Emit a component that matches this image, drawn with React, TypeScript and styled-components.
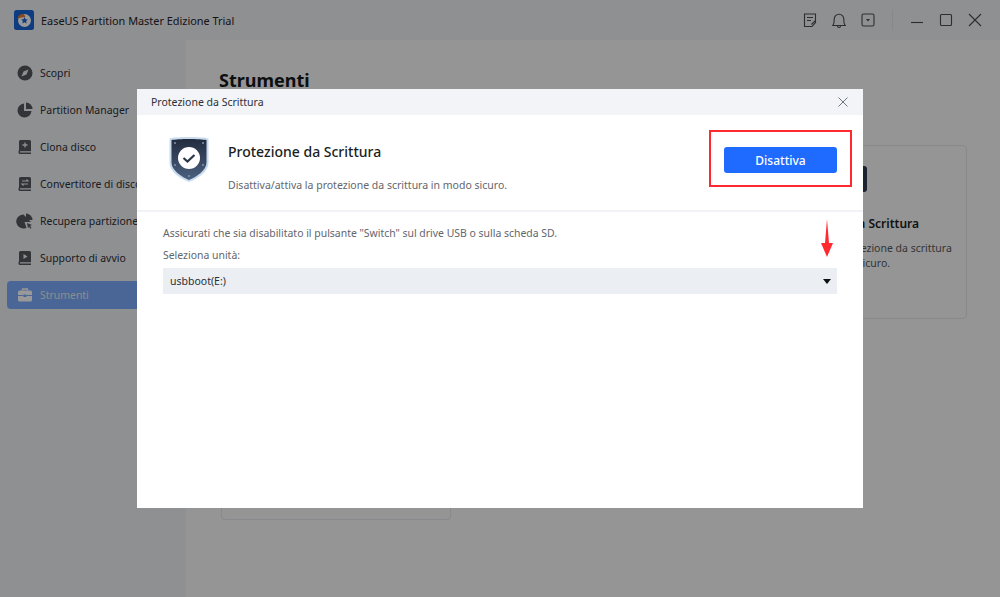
import React from "react";
import styled, { createGlobalStyle } from "styled-components";

const Global = createGlobalStyle`
  html, body { margin: 0; padding: 0; height: 100%; overflow: hidden; }
  body { font-family: "Noto Sans", "Open Sans", Arial, sans-serif; background: #f8f8f8; }
  #root { height: 100%; }
`;

const Page = styled.div`
  position: relative;
  width: 1000px;
  height: 597px;
  display: flex;
  flex-direction: column;
  overflow: hidden;
`;

const TitleBar = styled.header`
  height: 40px;
  flex: none;
  display: flex;
  align-items: center;
  padding: 0 18px 0 14px;
  background: #eff0f3;
`;

const AppTitle = styled.span`
  margin-left: 7px;
  font-size: 10.9px;
  color: #1f2329;
  flex: 1;
`;

const WinIcons = styled.div`
  display: flex;
  align-items: center;
  gap: 15px;
  color: #4a4c52;
`;

const WinDivider = styled.span`
  width: 1px;
  height: 20px;
  background: #e2e3e6;
  margin: 0 2px;
`;

const Body = styled.div`
  flex: 1;
  display: flex;
  min-height: 0;
`;

const Sidebar = styled.nav`
  width: 186px;
  flex: none;
  background: #eff0f3;
  padding: 19px 7px 0;
  box-sizing: border-box;
  display: flex;
  flex-direction: column;
  gap: 9px;
`;

const NavItem = styled.div<{ $active?: boolean }>`
  height: 28px;
  display: flex;
  align-items: center;
  gap: 6px;
  padding-left: 9px;
  border-radius: 4px;
  font-size: 10.45px;
  white-space: nowrap;
  color: ${(p) => (p.$active ? "#e6e9f0" : "#2c2f36")};
  background: ${(p) => (p.$active ? "#7aaafa" : "transparent")};
`;

const Main = styled.main`
  flex: 1;
  background: #f8f8f8;
  padding: 26px 34px 0 33px;
  box-sizing: border-box;
`;

const Heading = styled.h1`
  margin: 0 0 51px;
  font-size: 18px;
  line-height: 28px;
  font-weight: 700;
  color: #16181c;
`;

const CardGrid = styled.div`
  margin-left: 2px;
  display: grid;
  grid-template-columns: repeat(3, 230px);
  grid-auto-rows: 174px;
  gap: 27px 28px;
`;

const Card = styled.article<{ $column?: number }>`
  grid-column: ${(p) => p.$column ?? "auto"};
  border: 1px solid #e2e4e9;
  border-radius: 4px;
  padding: 20px 12px 0;
  box-sizing: border-box;
  display: flex;
  flex-direction: column;
  align-items: center;
  text-align: center;
`;

const CardIcon = styled.span`
  width: 30px;
  height: 26px;
  border-radius: 3px;
  background: #2f3a4e;
`;

const CardTitle = styled.h3`
  margin: 23px 0 8px;
  font-size: 12px;
  line-height: 18px;
  font-weight: 600;
  color: #1b1d22;
`;

const CardText = styled.p`
  margin: 0;
  font-size: 10.5px;
  line-height: 15px;
  color: #55585f;
`;

const Overlay = styled.div`
  position: absolute;
  inset: 0;
  background: rgba(0, 0, 0, 0.4);
  display: flex;
  align-items: center;
  justify-content: center;
`;

const Modal = styled.section`
  position: relative;
  width: 726px;
  height: 419px;
  background: #fff;
  display: flex;
  flex-direction: column;
`;

const ModalHeader = styled.div`
  height: 26px;
  flex: none;
  background: #f2f4f8;
  display: flex;
  align-items: center;
  justify-content: space-between;
  padding: 0 15px 0 14px;
  font-size: 10.5px;
  color: #2c2f36;
`;

const Hero = styled.div`
  height: 97px;
  flex: none;
  box-sizing: border-box;
  border-bottom: 2px solid #f1f3f6;
  display: flex;
  align-items: flex-start;
  padding: 20px 26px 0 31px;
`;

const HeroText = styled.div`
  flex: 1;
  margin: 8px 0 0 18px;
  display: flex;
  flex-direction: column;
`;

const HeroTitle = styled.h2`
  margin: 0 0 16px;
  font-size: 14px;
  line-height: 18px;
  font-weight: 500;
  color: #1b1d22;
`;

const HeroDesc = styled.p`
  margin: 0;
  font-size: 10.5px;
  line-height: 16px;
  color: #63666d;
`;

const PrimaryButton = styled.button`
  width: 113px;
  height: 26px;
  margin-top: 12px;
  border: 0;
  border-radius: 3px;
  background: #1f6bff;
  color: #fff;
  font: 500 12px "Noto Sans", sans-serif;
`;

const Content = styled.div`
  padding: 13px 26px 0;
  display: flex;
  flex-direction: column;
`;

const Hint = styled.p`
  margin: 0 0 6px;
  font-size: 10.45px;
  line-height: 16px;
  color: #63666d;
`;

const Select = styled.div`
  height: 26px;
  margin-top: -1px;
  background: #ebeef3;
  display: flex;
  align-items: center;
  justify-content: space-between;
  padding: 0 6px 0 7px;
  font-size: 10.5px;
  color: #2c2f36;
`;

const Caret = styled.span`
  width: 0;
  height: 0;
  border-left: 4px solid transparent;
  border-right: 4px solid transparent;
  border-top: 5px solid #111;
`;

const Highlight = styled.div`
  position: absolute;
  left: 572px;
  top: 41px;
  width: 143px;
  height: 57px;
  border: 2px solid #ff2a2f;
  box-sizing: border-box;
`;

const ArrowMark = styled.svg`
  position: absolute;
  left: 683px;
  top: 130px;
`;

const Ico = ({ children, size = 18 }: { children: React.ReactNode; size?: number }) => (
  <svg width={size} height={size} viewBox="0 0 18 18" fill="none" style={{ flex: "none" }}>
    {children}
  </svg>
);

const dark = "#55575e";

const Logo = () => (
  <svg width="20" height="20" viewBox="0 0 20 20" style={{ flex: "none" }}>
    <rect width="20" height="20" rx="2.5" fill="#1665d8" />
    <circle cx="10.5" cy="10.5" r="6.5" fill="#fff" />
    <path d="M3.5 8.5C4 5.5 7 3.5 10 4l1.5 3-4 .5z" fill="#e8792b" />
    <path d="M10.5 7l1 2.3 2.4.2-1.8 1.6.6 2.4-2.2-1.3-2.2 1.3.6-2.4-1.8-1.6 2.4-.2z" fill="#1665d8" />
  </svg>
);

const Shield = () => (
  <svg width="42" height="48" viewBox="0 0 42 48" style={{ flex: "none" }}>
    <defs>
      <linearGradient id="sg" x1="0" y1="0" x2="0" y2="1">
        <stop offset="0" stopColor="#232c3e" />
        <stop offset="1" stopColor="#4b6180" />
      </linearGradient>
    </defs>
    <path d="M1.5 3.5C8 1.5 34 1.5 40.5 3.5V28C40.5 37 29 44 21 47C13 44 1.5 37 1.5 28z" fill="#c9dbee" />
    <path d="M3.5 5C10 3.5 32 3.5 38.5 5V27.5C38.5 35.5 28 42 21 45C14 42 3.5 35.5 3.5 27.5z" fill="url(#sg)" />
    <circle cx="21" cy="23" r="11" fill="#fff" />
    <path d="M15.5 23l4 3.6 7-6.6" fill="none" stroke="#2b3648" strokeWidth="2.2" />
    <g fill="#8494a8">
      <circle cx="7" cy="8" r="1" /><circle cx="35" cy="8" r="1" />
      <circle cx="7" cy="30" r="1" /><circle cx="35" cy="30" r="1" /><circle cx="21" cy="41" r="1" />
    </g>
  </svg>
);

const Book = ({ children }: { children?: React.ReactNode }) => (
  <Ico>
    <path d="M3 3.5A1.5 1.5 0 0 1 4.5 2h9A1.5 1.5 0 0 1 15 3.5V13H3z" fill={dark} />
    <path d="M2.5 13.5c0-1 .7-1.5 1.5-1.5h11v1.2H4.2c-.5 0-.5 1.3 0 1.3H15V16H4c-.9 0-1.5-.7-1.5-1.5z" fill={dark} />
    {children}
  </Ico>
);

const navItems: { label: string; icon: React.ReactNode; active?: boolean }[] = [
  {
    label: "Scopri",
    icon: (
      <Ico>
        <circle cx="9" cy="9" r="7.5" fill={dark} />
        <path d="M12.5 5.5L10.5 10.5L5.5 12.5L7.5 7.5z" fill="#eff0f3" />
      </Ico>
    ),
  },
  {
    label: "Partition Manager",
    icon: (
      <Ico>
        <path d="M8 2.5a7 7 0 1 0 7.5 7.5H8z" fill={dark} />
        <path d="M10 1.5a6.5 6.5 0 0 1 6.5 6.5H10z" fill={dark} />
      </Ico>
    ),
  },
  {
    label: "Clona disco",
    icon: (
      <Book>
        <path d="M9 4.5v5M6.5 7h5" stroke="#eff0f3" strokeWidth="1.3" />
      </Book>
    ),
  },
  {
    label: "Convertitore di disco",
    icon: (
      <Book>
        <path d="M6 6h6l-1.5-1.5M12 9H6l1.5 1.5" stroke="#eff0f3" strokeWidth="1.1" />
      </Book>
    ),
  },
  {
    label: "Recupera partizione",
    icon: (
      <Ico>
        <path d="M8 2.5a7 7 0 1 0 3 13.2L9 10V10h6.500z" fill={dark} transform="translate(-.5 0)" />
        <path d="M10 1.5a6.5 6.5 0 0 1 6.5 6.5H10z" fill={dark} />
        <path d="M11 11l5 2-2 1 1.5 2-1 .7-1.5-2-1 1.5z" fill={dark} />
      </Ico>
    ),
  },
  {
    label: "Supporto di avvio",
    icon: (
      <Book>
        <path d="M7.5 5l4 2.5-4 2.5z" fill="#eff0f3" />
      </Book>
    ),
  },
  {
    label: "Strumenti",
    active: true,
    icon: (
      <Ico>
        <path d="M6.5 4.5V3h5v1.5" stroke="#fff" strokeWidth="1.3" />
        <rect x="2" y="4.5" width="14" height="11" rx="1.5" fill="#fff" />
        <path d="M2 9.5h5.5M10.5 9.5H16" stroke="#7aaafa" strokeWidth="1" />
        <rect x="7.5" y="8.5" width="3" height="2.5" fill="#7aaafa" />
      </Ico>
    ),
  },
];

export default function App() {
  return (
    <Page>
      <Global />
      <TitleBar>
        <Logo />
        <AppTitle>EaseUS Partition Master Edizione Trial</AppTitle>
        <WinIcons>
          <svg width="14" height="16" viewBox="0 0 14 16" fill="none" stroke="currentColor" strokeWidth="1.1">
            <path d="M1.5 2h11v8.5L9 14.500H1.5z" /><path d="M4 5.500h6M4 8.500h4" /><path d="M8.500 12.500l3.500-3.500" />
          </svg>
          <svg width="14" height="17" viewBox="0 0 14 17" fill="none" stroke="currentColor" strokeWidth="1.1">
            <path d="M.8 13.500c1.400-1.500 1.400-3 1.400-6.500a4.800 4.800 0 0 1 9.600 0c0 3.500 0 5 1.400 6.500z" /><path d="M5.500 14a1.500 1.500 0 0 0 3 0" />
          </svg>
          <svg width="14" height="14" viewBox="0 0 14 14" fill="none" stroke="currentColor" strokeWidth="1.1">
            <rect x="1" y="1" width="12" height="12" rx="1.500" /><path d="M5 6h4L7 8.500z" fill="currentColor" stroke="none" />
          </svg>
          <WinDivider />
          <svg width="14" height="14" viewBox="0 0 14 14" fill="none" stroke="currentColor" strokeWidth="1.1">
            <path d="M1 9.500h12" />
          </svg>
          <svg width="14" height="14" viewBox="0 0 14 14" fill="none" stroke="currentColor" strokeWidth="1.1">
            <rect x="1.500" y="1.500" width="11" height="11" rx="1" />
          </svg>
          <svg width="14" height="14" viewBox="0 0 14 14" fill="none" stroke="currentColor" strokeWidth="1.1">
            <path d="M1 1l12 12M13 1L1 13" />
          </svg>
        </WinIcons>
      </TitleBar>
      <Body>
        <Sidebar>
          {navItems.map((n) => (
            <NavItem key={n.label} $active={n.active}>
              {n.icon}
              {n.label}
            </NavItem>
          ))}
        </Sidebar>
        <Main>
          <Heading>Strumenti</Heading>
          <CardGrid>
            <Card $column={3}>
              <CardIcon />
              <CardTitle>Protezione da Scrittura</CardTitle>
              <CardText>Attiva/disattiva la protezione da scrittura in modo sicuro.</CardText>
            </Card>
            <Card $column={1} />
          </CardGrid>
        </Main>
      </Body>
      <Overlay>
        <Modal>
          <ModalHeader>
            Protezione da Scrittura
            <svg width="10" height="10" viewBox="0 0 10 10" stroke="#6d7683" strokeWidth="1" fill="none">
              <path d="M.5.5l9 9M9.500.5l-9 9" />
            </svg>
          </ModalHeader>
          <Hero>
            <Shield />
            <HeroText>
              <HeroTitle>Protezione da Scrittura</HeroTitle>
              <HeroDesc>Disattiva/attiva la protezione da scrittura in modo sicuro.</HeroDesc>
            </HeroText>
            <PrimaryButton>Disattiva</PrimaryButton>
          </Hero>
          <Content>
            <Hint>Assicurati che sia disabilitato il pulsante "Switch" sul drive USB o sulla scheda SD.</Hint>
            <Hint>Seleziona unità:</Hint>
            <Select>
              usbboot(E:)
              <Caret />
            </Select>
          </Content>
          <Highlight />
          <ArrowMark width="14" height="38" viewBox="0 0 14 38">
            <path d="M7 0L9 24H13L7 38L1 24H5z" fill="#ff2a2f" />
          </ArrowMark>
        </Modal>
      </Overlay>
    </Page>
  );
}
